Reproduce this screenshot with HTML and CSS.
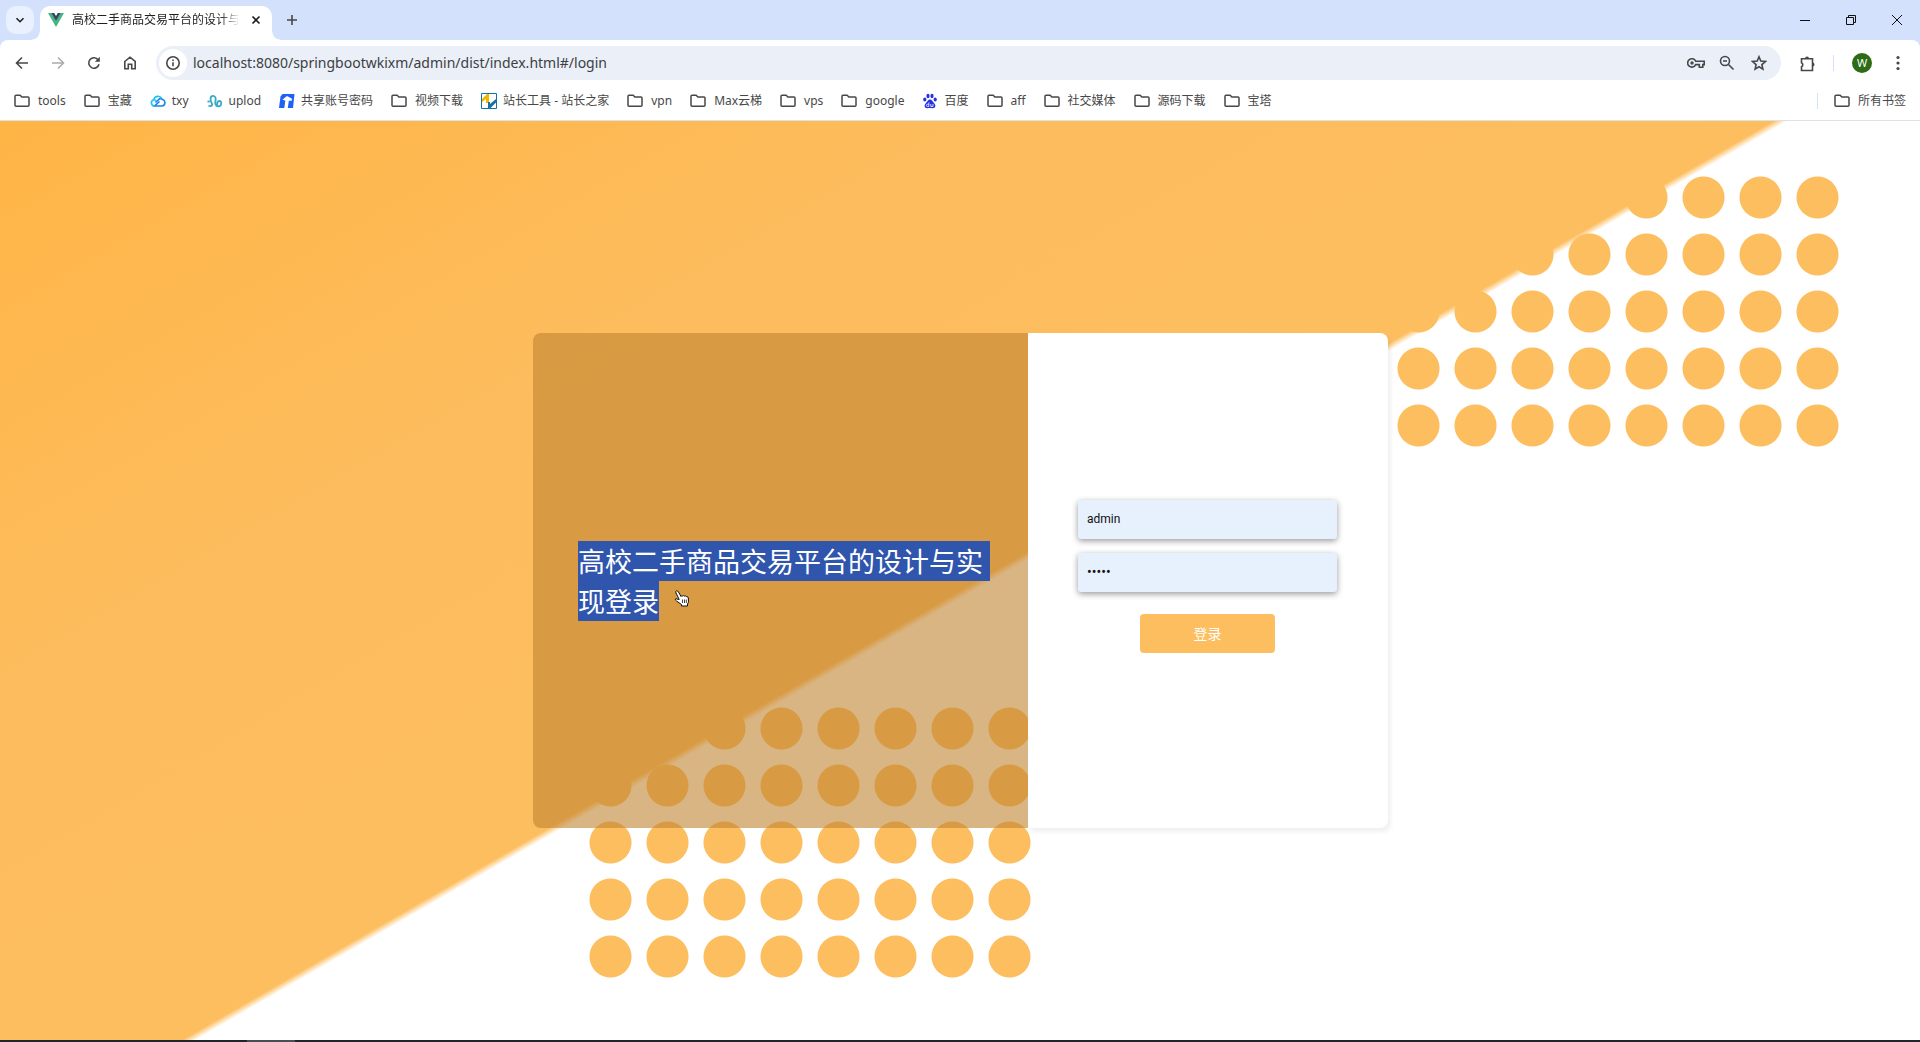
FILE: index.html
```html
<!DOCTYPE html>
<html lang="zh-CN">
<head>
<meta charset="utf-8">
<title>高校二手商品交易平台的设计与实现</title>
<link rel="stylesheet" href="styles.css">
</head>
<body>
<svg class="defs" aria-hidden="true">
  <symbol id="folder" viewBox="0 0 16 16"><path d="M2 2.200h4.200l1.600 1.700h6.200q1 0 1 1v7.400q0 1-1 1H2q-1 0-1-1V3.200q0-1 1-1z" fill="none" stroke="#474747" stroke-width="1.500" stroke-linejoin="round"/></symbol>
</svg>
<div class="browser">
  <header>
    <div class="tabs">
      <button class="tab-search" aria-label="搜索标签页"><svg width="10" height="10" viewBox="0 0 10 10"><path d="M1.500 3.200 5 6.700l3.500-3.500" class="line dark"/></svg></button>
      <div class="tab">
        <svg width="16" height="14" viewBox="0 0 16 14"><path d="M0 0h3.200L8 8.300 12.800 0H16L8 14z" fill="#41b883"/><path d="M3.200 0H6.200L8 3.100 9.800 0h3L8 8.300z" fill="#35495e"/></svg>
        <span class="tab-title">高校二手商品交易平台的设计与</span>
        <button class="icon-btn" aria-label="关闭"><svg width="10" height="10" viewBox="0 0 10 10"><path d="M1.500 1.500l7 7m0-7-7 7" class="line dark"/></svg></button>
      </div>
      <button class="icon-btn new-tab" aria-label="新标签页"><svg width="12" height="12" viewBox="0 0 12 12"><path d="M6 1v10M1 6h10" class="line"/></svg></button>
      <div class="window-controls">
        <button class="icon-btn" aria-label="最小化"><svg width="10" height="10" viewBox="0 0 10 10"><path d="M0 5.500h10" stroke="#111"/></svg></button>
        <button class="icon-btn" aria-label="还原"><svg width="10" height="10" viewBox="0 0 10 10"><path d="M.5 2.500h7v7h-7zM2.500 2V.5h7v7H8" fill="none" stroke="#111"/></svg></button>
        <button class="icon-btn" aria-label="关闭窗口"><svg width="10" height="10" viewBox="0 0 10 10"><path d="M0 0l10 10M10 0 0 10" stroke="#111"/></svg></button>
      </div>
    </div>
    <div class="toolbar">
      <div class="nav">
        <button class="icon-btn" aria-label="后退"><svg width="16" height="16" viewBox="0 0 16 16"><path d="M14 8H3M8 2.500 2.500 8 8 13.500" class="line"/></svg></button>
        <button class="icon-btn off" aria-label="前进"><svg width="16" height="16" viewBox="0 0 16 16"><path d="M2 8h11M8 2.500 13.500 8 8 13.500" class="line"/></svg></button>
        <button class="icon-btn" aria-label="刷新"><svg width="16" height="16" viewBox="0 0 16 16"><path d="M13 9.200A5.200 5.200 0 1 1 12.200 5" class="line"/><path d="M13.800 1.800v5H8.800z" fill="#474747"/></svg></button>
        <button class="icon-btn" aria-label="主页"><svg width="16" height="16" viewBox="0 0 16 16"><path d="M2.800 6.500 8 2.200l5.200 4.300v7.200H9.700V9.300H6.300v4.400H2.800z" class="line"/></svg></button>
      </div>
      <div class="omnibox">
        <span class="site-info"><svg width="16" height="16" viewBox="0 0 16 16"><circle cx="8" cy="8" r="6.200" class="line"/><path d="M8 7.200v4M8 4.500v1.500" class="line"/></svg></span>
        <input class="url" aria-label="地址" value="localhost:8080/springbootwkixm/admin/dist/index.html#/login">
        <button class="icon-btn" aria-label="密码"><svg width="18" height="12" viewBox="0 0 18 12"><path d="M8.700 4.200h8.500v3.400h-1.400v2.600h-3.500V7.600H8.700a4.200 4.200 0 1 1 0-3.400z" class="line"/><circle cx="5" cy="6" r="1.700" fill="#474747"/></svg></button>
        <button class="icon-btn" aria-label="缩放"><svg width="16" height="16" viewBox="0 0 16 16"><circle cx="6" cy="6" r="4.500" class="line"/><path d="M9.500 9.500l5 5M4 6h4" class="line"/></svg></button>
        <button class="icon-btn" aria-label="收藏"><svg width="16" height="16" viewBox="0 0 16 16"><path d="M8 1.800l1.800 4.300 4.600.4-3.500 3.100 1 4.600L8 11.800l-3.900 2.400 1-4.600-3.500-3.100 4.600-.4z" class="line"/></svg></button>
      </div>
      <div class="tools">
        <button class="icon-btn" aria-label="扩展程序"><svg width="18" height="18" viewBox="0 0 18 18"><path d="M2.500 3.800H13.500V15.500H2.500V11.800a2.200 2.200 0 0 0 0-4z" class="line"/><path d="M6 3.500a2 2 0 0 1 4 0zM13.500 7.500a2 2 0 0 1 0 4z" fill="#474747"/></svg></button>
        <span class="divider"></span>
        <button class="avatar">W</button>
        <button class="icon-btn" aria-label="菜单"><svg width="4" height="16" viewBox="0 0 4 16"><g fill="#474747"><circle cx="2" cy="2.500" r="1.600"/><circle cx="2" cy="8" r="1.600"/><circle cx="2" cy="13.500" r="1.600"/></g></svg></button>
      </div>
    </div>
    <nav class="bookmarks">
      <a href="#"><svg class="f"><use href="#folder"/></svg>tools</a>
      <a href="#"><svg class="f"><use href="#folder"/></svg>宝藏</a>
      <a href="#" class="site"><svg viewBox="0 0 16 16"><path d="M5.500 9.500 8.500 6.800a3 3 0 0 1 4.200-.2A3.300 3.300 0 0 1 12 13H4.500l5-4.500" fill="none" stroke="#1583f0" stroke-width="1.600"/><path d="M4.500 13a3.200 3.200 0 0 1-.7-6.300A4.200 4.200 0 0 1 11.600 5.500M3.800 6.700q1.500-.2 2.700 1.500" fill="none" stroke="#22c3ee" stroke-width="1.600"/></svg>txy</a>
      <a href="#" class="site"><svg viewBox="0 0 16 16"><path d="M1.500 12.500c2.500 1.500 4.500 0 3.200-2.500C3 7 3 2.800 6 2.800S9 6 8.300 9s1.700 5 4.200 4.200S14.500 8 12.500 8 9.500 10.500 10.500 13" fill="none" stroke="#3aa9c8" stroke-width="1.800"/><path d="M.5 8.500h2.300" stroke="#3aa9c8" stroke-width="1.800"/></svg>uplod</a>
      <a href="#" class="site"><svg viewBox="0 0 16 16"><path d="M3.500 1h12L14 15H0L1.500 3.500z" fill="#1e62f5"/><path d="M3.500 6.500 8 3l5 2.800-.3 2H9.800L8.800 15H5.300l1-7.200z" fill="#fff"/></svg>共享账号密码</a>
      <a href="#"><svg class="f"><use href="#folder"/></svg>视频下载</a>
      <a href="#" class="site"><svg viewBox="0 0 16 16"><path d="M.5.5h15v15H.5z" fill="#fff" stroke="#176fa8"/><path d="M1 6 6 1h2v9H5V6L1 9z" fill="#f0b800"/><path d="M7 15V9h2v2l6-5v3.500L9.500 15z" fill="#176fa8"/></svg>站长工具 - 站长之家</a>
      <a href="#"><svg class="f"><use href="#folder"/></svg>vpn</a>
      <a href="#"><svg class="f"><use href="#folder"/></svg>Max云梯</a>
      <a href="#"><svg class="f"><use href="#folder"/></svg>vps</a>
      <a href="#"><svg class="f"><use href="#folder"/></svg>google</a>
      <a href="#" class="site"><svg viewBox="0 0 16 16"><g fill="#2932e1"><ellipse cx="2.800" cy="6.500" rx="1.600" ry="2"/><ellipse cx="6" cy="3" rx="1.600" ry="2.200"/><ellipse cx="10" cy="3" rx="1.600" ry="2.200"/><ellipse cx="13.200" cy="6.500" rx="1.600" ry="2"/><path d="M8 6.500c2 0 2.500 2 4 3.500 2.500 2.500 1.300 5.500-1.500 5.200-1.700-.3-3.300-.3-5 0C2.700 15.500 1.500 12.500 4 10c1.500-1.500 2-3.500 4-3.500z"/></g><path d="M6.800 9.500v4H5.500a1 1 0 0 1 0-2.200H6.800M8.800 11v2.500h2.200V11" fill="none" stroke="#fff" stroke-width=".8"/></svg>百度</a>
      <a href="#"><svg class="f"><use href="#folder"/></svg>aff</a>
      <a href="#"><svg class="f"><use href="#folder"/></svg>社交媒体</a>
      <a href="#"><svg class="f"><use href="#folder"/></svg>源码下载</a>
      <a href="#"><svg class="f"><use href="#folder"/></svg>宝塔</a>
      <span class="divider"></span>
      <a href="#"><svg class="f"><use href="#folder"/></svg>所有书签</a>
    </nav>
  </header>
  <main class="stage">
    <div class="card">
      <section class="intro">
        <h1><span class="selected full">高校二手商品交易平台的设计与实</span><span class="selected">现登录</span></h1>
        <svg class="pointer" width="16" height="17" viewBox="0 0 16 17"><path d="M5.200 9.500 2 3Q1.300 1 2.500.8T4.500 2L7 6.500q.3-1.300 1.700-.5.800-1 2 .2 1-.8 2 .5 1.500-.2 1.600 1.300l.2 3.200q0 1.800-1 2.800v2H7.500v-1.500L2.500 11Q.8 9.800 1.300 9t2 .2z" fill="#fff" stroke="#111"/><path d="M8.500 9.500V13M10.500 9.500V13M12.300 9.500V13" stroke="#111" stroke-width=".8"/></svg>
      </section>
      <form class="login">
        <input type="text" value="admin" aria-label="账号">
        <input type="password" value="admin" aria-label="密码">
        <button type="button">登录</button>
      </form>
    </div>
  </main>
  <footer class="taskbar"><span></span></footer>
</div>
</body>
</html>
```
FILE: styles.css
```css
* { box-sizing: border-box; }
body {
  margin: 0;
  font: 12px/16px "Noto Sans", "Noto Sans CJK SC", sans-serif;
  color: #474747;
}
button { border: 0; padding: 0; background: none; font: inherit; }
input { border: 0; min-width: 0; outline: 0; }
svg { display: block; flex: none; }
.defs { position: absolute; width: 0; height: 0; }
.line { fill: none; stroke: #474747; stroke-width: 1.6; }
.dark { stroke: #1f1f1f; }
.browser { display: flex; flex-direction: column; min-height: 100vh; }
header { border-bottom: 1px solid #dfe1e5; background: #d3e1fc; }
.icon-btn { display: grid; place-items: center; width: 16px; height: 16px; flex: none; }

.tabs { display: flex; height: 40px; padding: 6px 17px 0 6px; }
.tab-search {
  display: grid; place-items: center;
  width: 28px; height: 28px; margin-right: 6px;
  border-radius: 10px; background: #e9f1fe;
}
.tab {
  position: relative;
  display: flex; align-items: center; gap: 8px;
  width: 232px; padding: 0 8px 6px;
  border-radius: 10px 10px 0 0; background: #fff;
}
.tab::before, .tab::after {
  content: ""; position: absolute; bottom: 0; width: 8px; height: 8px;
}
.tab::before { right: 100%; background: radial-gradient(circle at 0 0, transparent 7px, #fff 8px); }
.tab::after { left: 100%; background: radial-gradient(circle at 100% 0, transparent 7px, #fff 8px); }
.tab-title {
  flex: none; white-space: nowrap; color: #1f1f1f;
  mask-image: linear-gradient(to right, #000 88%, transparent);
}
.new-tab { margin: 6px 0 0 12px; }
.window-controls { display: flex; gap: 30px; margin: 6px -2px 0 auto; }

.toolbar {
  display: flex; align-items: center; height: 46px; padding: 0 14px;
  border-radius: 8px 8px 0 0; background: #fff;
}
.nav { display: flex; gap: 20px; margin-right: 18px; }
.off { opacity: .45; }
.omnibox {
  display: flex; align-items: center; gap: 16px; flex: 1;
  height: 34px; padding: 0 14px 0 3px;
  border-radius: 17px; background: #ebeff8;
}
.site-info {
  display: grid; place-items: center;
  width: 28px; height: 28px; margin-right: -10px;
  border-radius: 14px; background: #fff;
}
.url { flex: 1; padding: 0; background: none; color: #3c4043; font: 14px/20px "Noto Sans", sans-serif; }
.tools { display: flex; align-items: center; gap: 18px; padding-left: 18px; }
.divider { width: 1px; height: 16px; background: #d3e1fc; }
.avatar { width: 20px; height: 20px; border-radius: 50%; background: #2d6b17; color: #fff; font-size: 11px; line-height: 20px; }

.bookmarks { display: flex; align-items: center; gap: 18px; height: 34px; padding: 0 14px 4px; background: #fff; white-space: nowrap; }
.bookmarks a { display: flex; align-items: center; gap: 8px; color: #474747; text-decoration: none; }
.bookmarks .site { gap: 6px; }
.bookmarks svg { width: 16px; height: 16px; }
.bookmarks .divider { margin-left: auto; margin-right: -2px; }

.stage {
  position: relative;
  display: flex; flex: 1; align-items: center; justify-content: center;
  padding: 40px 0 40px 1px;
  background: linear-gradient(150deg, #ffb445 0%, #fdbd5f 30%, #fdbe60 50.5%, #fff 50.9%);
}
.stage::before, .stage::after {
  content: ""; position: absolute; width: 456px; height: 285px;
  background: radial-gradient(circle, #fdbe60 20.5px, transparent 21.5px) 0 0 / 57px 57px;
}
.stage::before { top: 48px; right: 74px; }
.stage::after { bottom: 55px; left: 582px; }
.card { position: relative; z-index: 1; display: flex; min-height: 495px; }
.intro {
  position: relative;
  display: flex; align-items: center;
  width: 495px; padding: 0 37px 0 45px;
  border-radius: 8px 0 0 8px; background: rgba(191, 131, 48, .6);
}
h1 { margin: 0; font: 27px/40px "Noto Sans CJK SC", sans-serif; color: #fff; white-space: nowrap; }
.selected { display: block; width: fit-content; background: #2f55ad; }
.full { padding-right: 7px; }
.pointer { position: absolute; left: 141px; top: 257px; }
.login {
  display: flex; flex-direction: column; justify-content: center; gap: 14px;
  width: 360px; padding: 0 51px 8px 50px;
  border-radius: 0 8px 8px 0; background: #fff;
  box-shadow: 3px 4px 4px rgba(0, 0, 0, .06);
}
.login input {
  height: 39px; padding: 0 9px 2px;
  border-radius: 3px; background: #e7f0fd; color: #111;
  font: 12px/16px Roboto, sans-serif;
  box-shadow: 0 2px 6px rgba(0, 0, 0, .4);
}
.login input[type="password"] { font-size: 14px; }
.login button {
  align-self: center; width: 135px; height: 39px; margin-top: 8px;
  border-radius: 4px; background: #fdbe60; color: #fff; font-size: 14px;
}
.taskbar { height: 2px; padding-left: 247px; background: #1c262c; }
.taskbar span { display: block; width: 48px; height: 2px; background: #465157; }
```
